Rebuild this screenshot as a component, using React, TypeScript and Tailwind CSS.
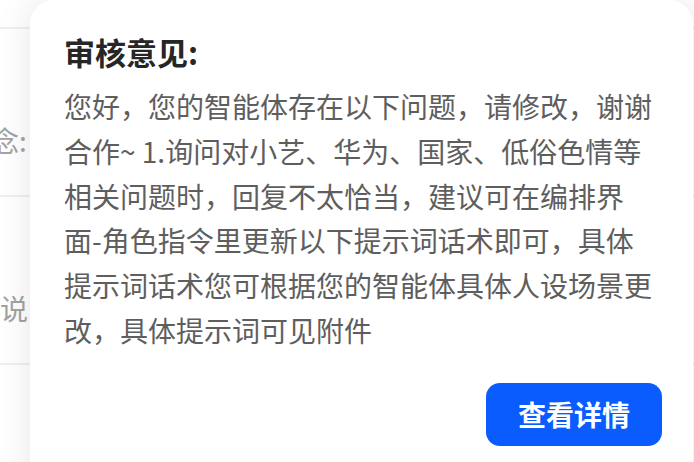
import React from 'react';

const font = { fontFamily: '"Noto Sans CJK SC", "Noto Sans", sans-serif' };

const rows = [
  { label: '念:', offset: '-ml-[9px]' },
  { label: '说', offset: 'ml-0' },
];

const App: React.FC = () => {
  return (
    <div className="relative w-[694px] h-[462px] overflow-hidden bg-white" style={font}>
      {/* Page behind the popover */}
      <div className="flex flex-col">
        <div className="h-[29px] border-b-2 border-[#f0f0f0]" />
        {rows.map((row) => (
          <div key={row.label} className="h-[168px] border-b-2 border-[#f0f0f0] pt-[89px]">
            <div className={`${row.offset} text-[28px] leading-[44px] text-[#a3a3a3] whitespace-nowrap`}>
              {row.label}
            </div>
          </div>
        ))}
        <div className="h-[100px]" />
      </div>

      {/* Review popover */}
      <div className="absolute left-[30px] top-0 w-[663px] h-[520px] rounded-[24px] bg-white shadow-[0_0_36px_rgba(0,0,0,0.1)] pl-[34px] pr-[31px] pt-[32px]">
        <h2 className="text-[31px] leading-[40px] font-bold text-[#262626]">审核意见:</h2>
        <p className="mt-[12px] max-w-[592px] text-[28px] leading-[44.8px] text-[#5e5e5e]">
          您好，您的智能体存在以下问题，请修改，谢谢合作~ 1.询问对小艺、华为、国家、低俗色情等相关问题时，回复不太恰当，建议可在编排界面-角色指令里更新以下提示词话术即可，具体提示词话术您可根据您的智能体具体人设场景更改，具体提示词可见附件
        </p>
        <div className="mt-[30px] flex justify-end">
          <button className="w-[176px] h-[63px] rounded-[14px] bg-[#0b5cff] text-white text-[28px] font-bold">
            查看详情
          </button>
        </div>
      </div>
    </div>
  );
};

export default App;
